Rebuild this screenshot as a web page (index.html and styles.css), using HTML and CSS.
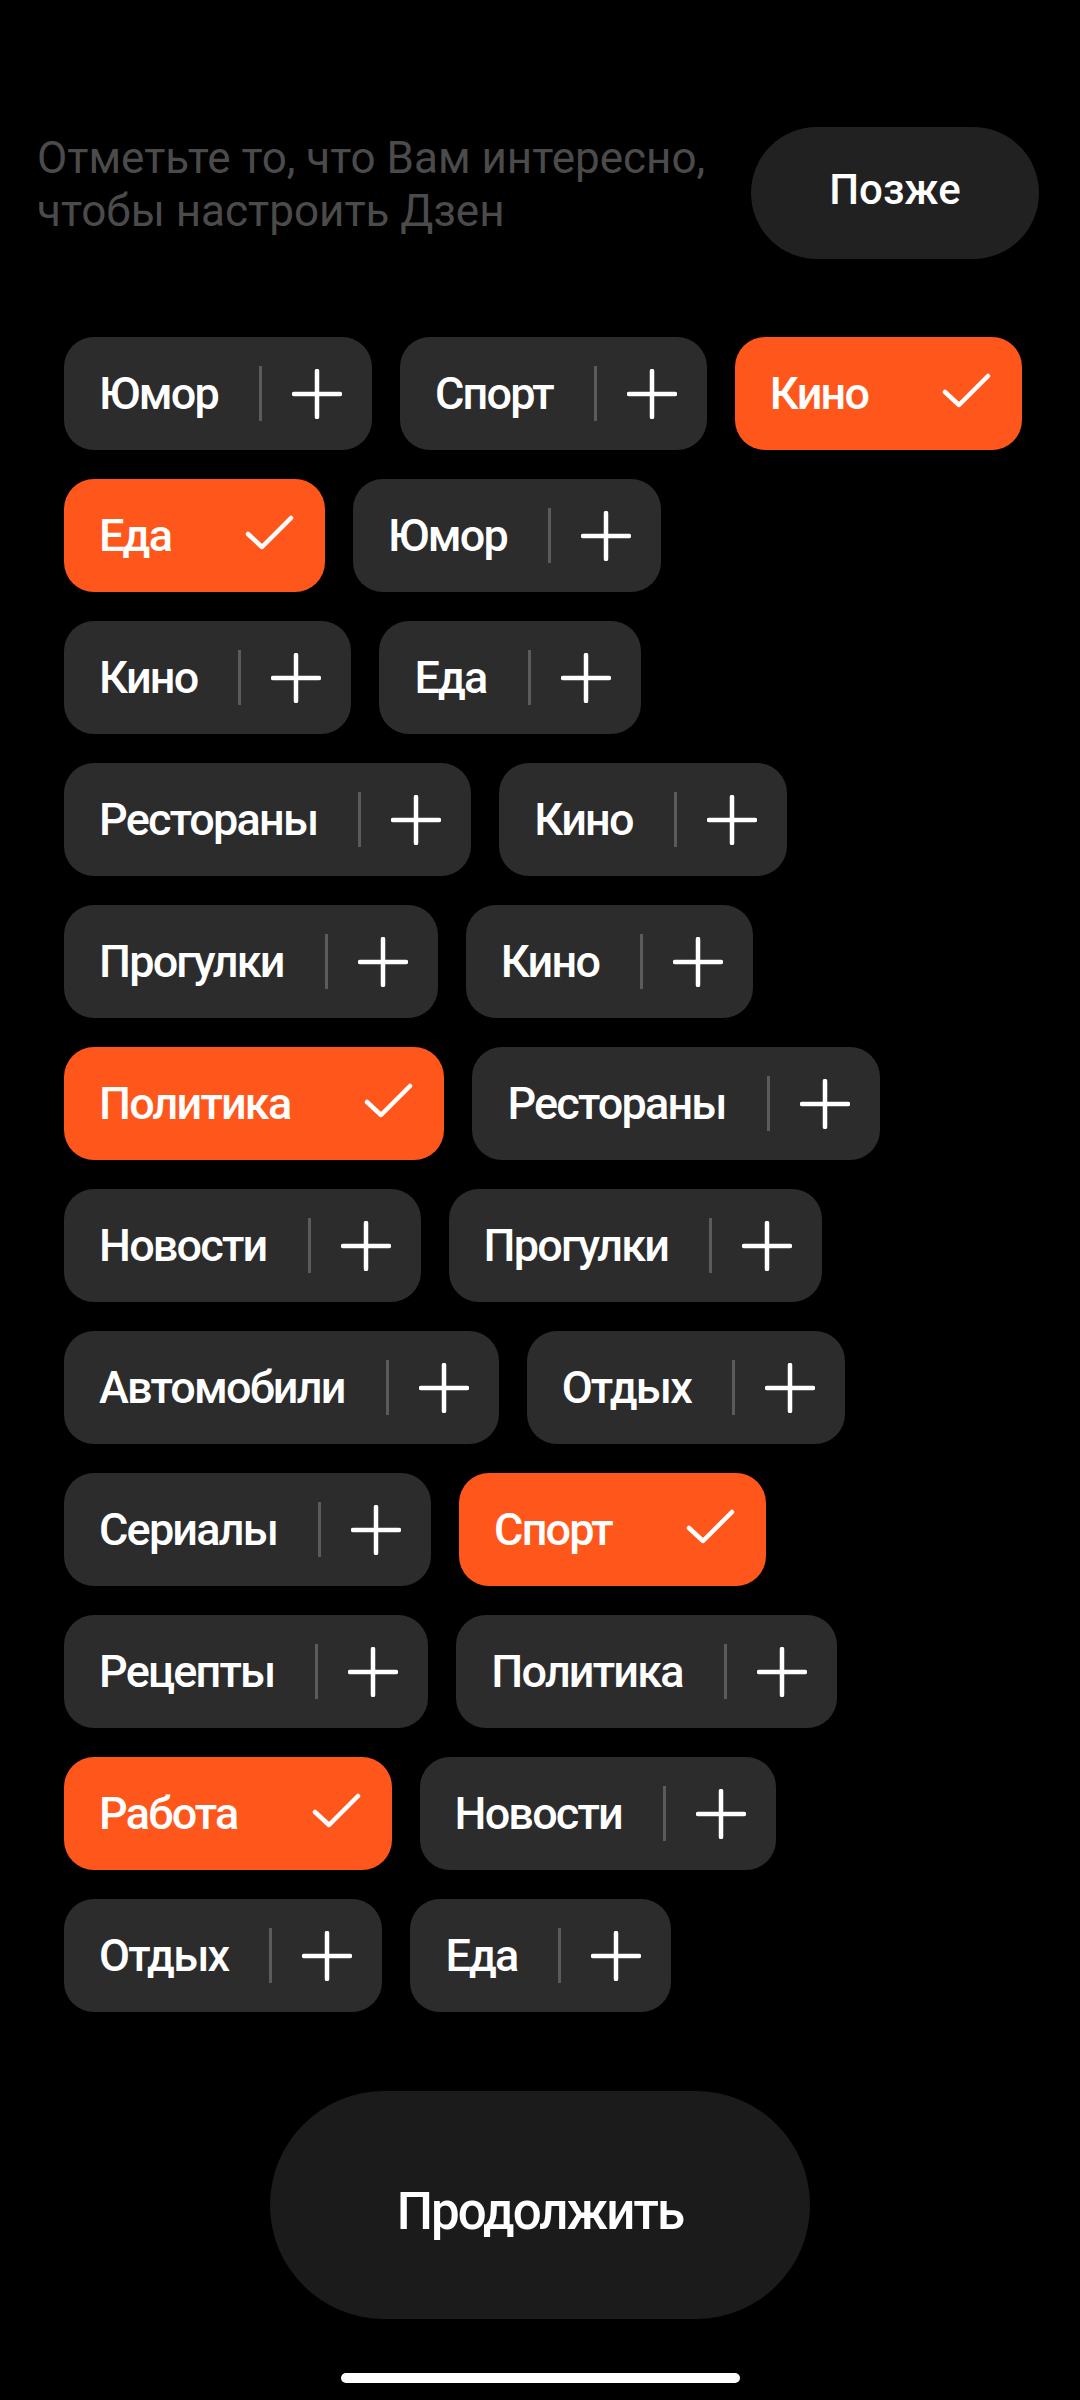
FILE: index.html
```html
<!DOCTYPE html>
<html lang="ru">
<head>
<meta charset="utf-8">
<link rel="stylesheet" href="styles.css">
</head>
<body>
<svg width="0" height="0" class="defs">
  <defs>
    <symbol id="plus" viewBox="0 0 50 50"><path d="M2 25H48M25 2V48" fill="none" stroke="#fff" stroke-width="4.5" stroke-linecap="round"/></symbol>
    <symbol id="check" viewBox="0 0 50 50"><path d="M3 23L17 36L46 7" fill="none" stroke="#fff" stroke-width="4.5" stroke-linecap="round" stroke-linejoin="round"/></symbol>
  </defs>
</svg>
<div class="screen">
  <header class="header">
    <p class="hint">Отметьте то, что Вам интересно,<br>чтобы настроить Дзен</p>
    <button class="later">Позже</button>
  </header>

  <main class="chips">
    <div class="row">
      <div class="chip"><span class="label">Юмор</span><i class="sep"></i><svg class="ico"><use href="#plus"/></svg></div>
      <div class="chip"><span class="label">Спорт</span><i class="sep"></i><svg class="ico"><use href="#plus"/></svg></div>
      <div class="chip on"><span class="label">Кино</span><i class="sep"></i><svg class="ico"><use href="#check"/></svg></div>
    </div>
    <div class="row">
      <div class="chip on"><span class="label">Еда</span><i class="sep"></i><svg class="ico"><use href="#check"/></svg></div>
      <div class="chip"><span class="label">Юмор</span><i class="sep"></i><svg class="ico"><use href="#plus"/></svg></div>
    </div>
    <div class="row">
      <div class="chip"><span class="label">Кино</span><i class="sep"></i><svg class="ico"><use href="#plus"/></svg></div>
      <div class="chip"><span class="label">Еда</span><i class="sep"></i><svg class="ico"><use href="#plus"/></svg></div>
    </div>
    <div class="row">
      <div class="chip"><span class="label">Рестораны</span><i class="sep"></i><svg class="ico"><use href="#plus"/></svg></div>
      <div class="chip"><span class="label">Кино</span><i class="sep"></i><svg class="ico"><use href="#plus"/></svg></div>
    </div>
    <div class="row">
      <div class="chip"><span class="label">Прогулки</span><i class="sep"></i><svg class="ico"><use href="#plus"/></svg></div>
      <div class="chip"><span class="label">Кино</span><i class="sep"></i><svg class="ico"><use href="#plus"/></svg></div>
    </div>
    <div class="row">
      <div class="chip on"><span class="label">Политика</span><i class="sep"></i><svg class="ico"><use href="#check"/></svg></div>
      <div class="chip"><span class="label">Рестораны</span><i class="sep"></i><svg class="ico"><use href="#plus"/></svg></div>
    </div>
    <div class="row">
      <div class="chip"><span class="label">Новости</span><i class="sep"></i><svg class="ico"><use href="#plus"/></svg></div>
      <div class="chip"><span class="label">Прогулки</span><i class="sep"></i><svg class="ico"><use href="#plus"/></svg></div>
    </div>
    <div class="row">
      <div class="chip"><span class="label">Автомобили</span><i class="sep"></i><svg class="ico"><use href="#plus"/></svg></div>
      <div class="chip"><span class="label">Отдых</span><i class="sep"></i><svg class="ico"><use href="#plus"/></svg></div>
    </div>
    <div class="row">
      <div class="chip"><span class="label">Сериалы</span><i class="sep"></i><svg class="ico"><use href="#plus"/></svg></div>
      <div class="chip on"><span class="label">Спорт</span><i class="sep"></i><svg class="ico"><use href="#check"/></svg></div>
    </div>
    <div class="row">
      <div class="chip"><span class="label">Рецепты</span><i class="sep"></i><svg class="ico"><use href="#plus"/></svg></div>
      <div class="chip"><span class="label">Политика</span><i class="sep"></i><svg class="ico"><use href="#plus"/></svg></div>
    </div>
    <div class="row">
      <div class="chip on"><span class="label">Работа</span><i class="sep"></i><svg class="ico"><use href="#check"/></svg></div>
      <div class="chip"><span class="label">Новости</span><i class="sep"></i><svg class="ico"><use href="#plus"/></svg></div>
    </div>
    <div class="row">
      <div class="chip"><span class="label">Отдых</span><i class="sep"></i><svg class="ico"><use href="#plus"/></svg></div>
      <div class="chip"><span class="label">Еда</span><i class="sep"></i><svg class="ico"><use href="#plus"/></svg></div>
    </div>
  </main>

  <footer class="footer">
    <button class="continue">Продолжить</button>
    <div class="home-bar"></div>
  </footer>
</div>
</body>
</html>
```
FILE: styles.css
```css
html, body {
  margin: 0;
  padding: 0;
  background: #000;
}
body {
  font-family: Roboto, "Noto Sans", sans-serif;
  color: #fff;
}
.defs {
  position: absolute;
  width: 0;
  height: 0;
}
.screen {
  width: 1080px;
  height: 2400px;
  display: flex;
  flex-direction: column;
  overflow: hidden;
}
.header {
  display: flex;
  justify-content: space-between;
  align-items: flex-start;
  padding: 127px 41px 0 37px;
}
.hint {
  margin: 5px 0 0;
  font-size: 44px;
  line-height: 53px;
  font-weight: 400;
  color: #4b4b4b;
}
.later {
  width: 288px;
  height: 132px;
  border: 0;
  border-radius: 66px;
  background: #212121;
  color: #fff;
  font-family: Roboto, sans-serif;
  font-size: 42px;
  font-weight: 500;
  padding: 0 0 8px;
}
.chips {
  display: flex;
  flex-direction: column;
  gap: 29px;
  padding: 78px 0 0 64px;
}
.row {
  display: flex;
  gap: 28px;
}
.chip {
  height: 113px;
  box-sizing: border-box;
  display: flex;
  align-items: center;
  padding: 0 30px 0 35px;
  border-radius: 30px;
  background: #2c2c2c;
}
.chip.on {
  background: #ff561b;
}
.label {
  font-size: 45px;
  font-weight: 500;
  letter-spacing: -1.8px;
  white-space: nowrap;
}
.sep {
  width: 3px;
  height: 55px;
  margin: 0 30px 0 41px;
  background: #5b5b5b;
}
.chip.on .sep {
  background: transparent;
}
.ico {
  width: 50px;
  height: 50px;
  display: block;
}
.footer {
  display: flex;
  flex-direction: column;
  align-items: center;
  padding-top: 79px;
}
.continue {
  width: 540px;
  height: 228px;
  border: 0;
  border-radius: 114px;
  background: #1b1b1b;
  color: #fff;
  font-family: Roboto, sans-serif;
  font-size: 51px;
  font-weight: 500;
  letter-spacing: -1.9px;
  padding: 12px 0 0;
}
.home-bar {
  width: 399px;
  height: 10px;
  border-radius: 5px;
  background: #fff;
  margin-top: 54px;
}
```
